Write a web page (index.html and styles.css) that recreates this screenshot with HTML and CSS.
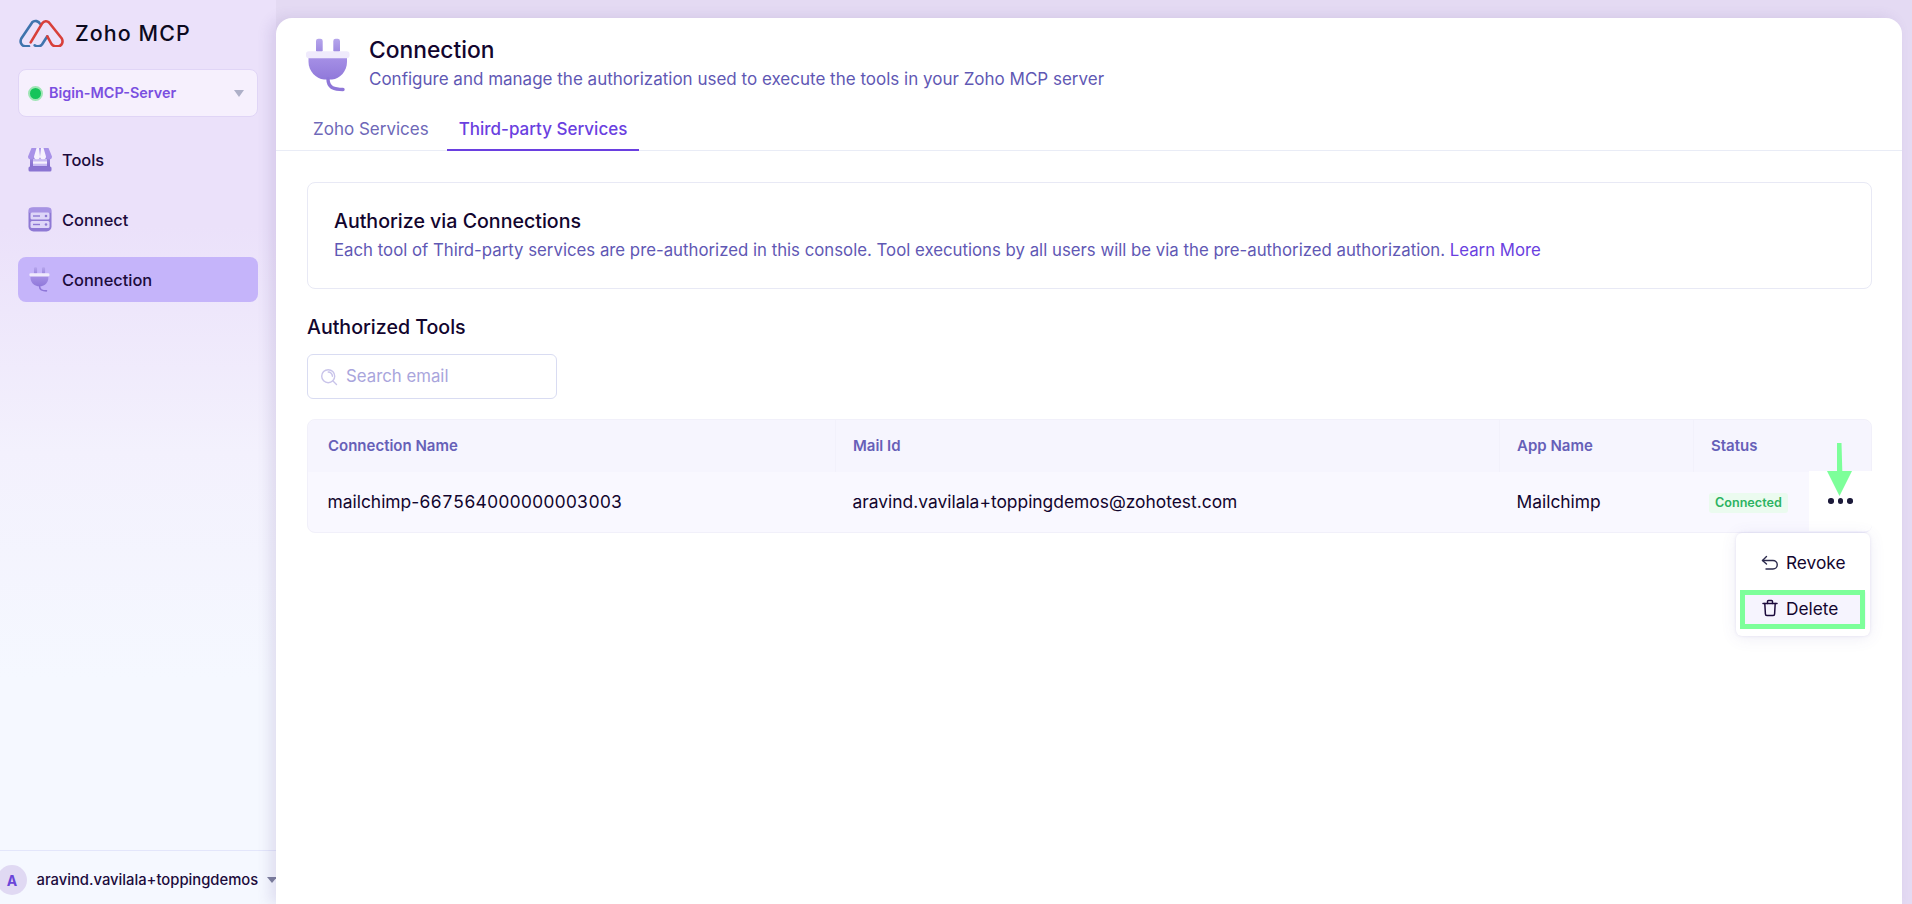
FILE: index.html
```html
<!DOCTYPE html>
<html lang="en">
<head>
<meta charset="utf-8">
<title>Zoho MCP - Connection</title>
<link rel="stylesheet" href="styles.css">
</head>
<body>
<svg class="defs" width="0" height="0" aria-hidden="true">
  <defs>
    <linearGradient id="plugBody" x1="0" y1="0" x2="0" y2="1">
      <stop offset="0" stop-color="#a690e6"/>
      <stop offset="1" stop-color="#9079da"/>
    </linearGradient>
    <linearGradient id="plugProng" x1="0" y1="0" x2="0" y2="1">
      <stop offset="0" stop-color="#b6a6ec"/>
      <stop offset="1" stop-color="#9d88e0"/>
    </linearGradient>
    <linearGradient id="shopBody" x1="0" y1="0" x2="0" y2="1">
      <stop offset="0" stop-color="#a592e2"/>
      <stop offset="1" stop-color="#7b63c8"/>
    </linearGradient>
    <g id="plug">
      <rect x="10" y="0.7" width="6.7" height="14" rx="2.4" fill="url(#plugProng)"/>
      <rect x="27.3" y="0.7" width="6.7" height="14" rx="2.4" fill="url(#plugProng)"/>
      <path d="M2.5 19h38.5v5C41 33 34 41 26 41.5H18C10 41 2.5 33 2.5 24z" fill="url(#plugBody)"/>
      <rect x="0" y="13.3" width="43.5" height="7" rx="2.8" fill="#efeafc"/>
      <path d="M22 41c0 4.5 1 6.5 4 8.500 3 1.500 7 2 11 2" fill="none" stroke="#8e76d8" stroke-width="3.400" stroke-linecap="round"/>
    </g>
  </defs>
</svg>
<div class="app">
  <aside class="sidebar">
    <div class="brand">
      <svg class="brand-logo" viewBox="0 0 45 28" fill="none" stroke-width="2.6" stroke-linecap="round" stroke-linejoin="round">
        <path d="M21 4.700C19.800 2.200 15.500 .8 13.300 3.200L2.300 19.500C.6 22.800 2.300 27 6 27.200H10" stroke="#3f74ad"/>
        <path d="M15.700 26.300C18 27.700 21 27.800 23 25.500L28.300 17.300" stroke="#3f74ad"/>
        <path d="M11.700 23.300L23.300 4.200C25 1.800 28.300 1.800 30 3.500L42.800 19.500C44.500 22.800 43 27 39.500 27.200H36.500C34.500 27.200 33.500 26.500 32.500 25L28.300 17.300" stroke="#d8403a"/>
      </svg>
      <span class="brand-name">Zoho MCP</span>
    </div>
    <div class="server-select">
      <span class="status-dot"></span>
      <span class="server-name">Bigin-MCP-Server</span>
      <span class="caret caret-server"></span>
    </div>
    <nav class="nav">
      <div class="nav-item">
        <svg class="nav-icon" viewBox="0 0 24 25">
          <rect x="2" y="8" width="20" height="15" rx="1.500" fill="url(#shopBody)"/>
          <rect x="5" y="12" width="14" height="7" fill="#c8bcf3"/>
          <rect x="5" y="14.500" width="14" height="2.200" fill="#f5f1fd"/>
          <rect x="0.500" y="19.500" width="23" height="5" rx="1.500" fill="#8a74d2"/>
          <path d="M3.500 1h17L24 9.500a3 3 0 0 1-6 0 3 3 0 0 1-6 0 3 3 0 0 1-6 0 3 3 0 0 1-6 0z" fill="#a892e8"/>
          <path d="M8.500 1h2.500L12 9.500a3 3 0 0 1-6 0z M13 1h2.500L18 9.500a3 3 0 0 1-6 0z" fill="#f6f2fe"/>
        </svg>
        <span>Tools</span>
      </div>
      <div class="nav-item">
        <svg class="nav-icon" viewBox="0 0 24 25">
          <rect x="0.500" y="0.500" width="23" height="24" rx="5" fill="#8e79d4"/>
          <rect x="0.500" y="0.500" width="23" height="6" rx="3" fill="#a793e4"/>
          <rect x="2.500" y="5.500" width="19" height="7" rx="1.500" fill="#ded6f8"/>
          <rect x="2.500" y="14" width="19" height="7" rx="1.500" fill="#ded6f8"/>
          <rect x="5" y="8.300" width="7" height="1.400" fill="#8e79d4"/>
          <rect x="5" y="16.800" width="7" height="1.400" fill="#8e79d4"/>
          <circle cx="18" cy="9" r="1.300" fill="#8e79d4"/>
          <circle cx="18" cy="17.500" r="1.300" fill="#8e79d4"/>
        </svg>
        <span>Connect</span>
      </div>
      <div class="nav-item nav-item-active">
        <svg class="nav-icon" viewBox="0 0 46 54">
          <use href="#plug"/>
        </svg>
        <span>Connection</span>
      </div>
    </nav>
    <div class="user-bar">
      <span class="avatar">A</span>
      <span class="user-name">aravind.vavilala+toppingdemos</span>
      <span class="caret caret-user"></span>
    </div>
  </aside>

  <main class="panel">
    <header class="page-head">
      <svg class="page-icon" viewBox="0 0 46 54">
        <use href="#plug"/>
      </svg>
      <div class="page-titles">
        <h1 class="page-title">Connection</h1>
        <p class="page-sub">Configure and manage the authorization used to execute the tools in your Zoho MCP server</p>
      </div>
    </header>
    <div class="tabs">
      <div class="tab">Zoho Services</div>
      <div class="tab tab-active">Third-party Services</div>
    </div>
    <section class="content">
      <div class="info-box">
        <h2 class="info-title">Authorize via Connections</h2>
        <p class="info-text">Each tool of Third-party services are pre-authorized in this console. Tool executions by all users will be via the pre-authorized authorization. <a class="link">Learn More</a></p>
      </div>
      <h2 class="section-title">Authorized Tools</h2>
      <div class="search">
        <svg class="search-icon" viewBox="0 0 18 18" fill="none" stroke="#c9c4ea" stroke-width="1.4" stroke-linecap="round">
          <circle cx="8.200" cy="8.200" r="6.500"/>
          <path d="M13 13l3.500 3.500"/>
          <path d="M8.200 4a4.200 4.200 0 0 1 4.200 4.200"/>
        </svg>
        <span class="search-text">Search email</span>
      </div>
      <div class="table">
        <div class="row head-row">
          <div class="cell c1">Connection Name</div>
          <div class="cell c2">Mail Id</div>
          <div class="cell c3">App Name</div>
          <div class="cell c4">Status</div>
        </div>
        <div class="row body-row">
          <div class="cell c1">mailchimp-<span class="digits">667564000000003003</span></div>
          <div class="cell c2">aravind.vavilala+toppingdemos@zohotest.com</div>
          <div class="cell c3">Mailchimp</div>
          <div class="cell c4"><span class="badge">Connected</span></div>
        </div>
        <div class="more"><span class="dot"></span><span class="dot"></span><span class="dot"></span></div>
        <div class="menu">
          <div class="menu-item">
            <svg class="menu-icon" viewBox="0 0 18 18" fill="none" stroke="#2b2a4c" stroke-width="1.4" stroke-linecap="round" stroke-linejoin="round">
              <path d="M5.500 2.500L1.500 6.500l4 3.500"/>
              <path d="M1.500 6.500H12a4.200 4.200 0 0 1 0 8.500H5"/>
            </svg>
            <span>Revoke</span>
          </div>
          <div class="menu-item menu-item-hover">
            <svg class="menu-icon" viewBox="0 0 18 18" fill="none" stroke="#1c0b3c" stroke-width="1.5" stroke-linecap="round" stroke-linejoin="round">
              <path d="M2 4.500h14"/>
              <path d="M6.500 4.500V2.500c0-.6.4-1 1-1h3c.6 0 1 .4 1 1v2"/>
              <path d="M3.800 4.500l.6 10.500c0 .9.7 1.500 1.500 1.500h6.200c.8 0 1.500-.6 1.500-1.500l.6-10.500"/>
            </svg>
            <span>Delete</span>
          </div>
        </div>
        <div class="highlight"></div>
        <svg class="arrow" viewBox="0 0 28 54">
          <path d="M12 0h4.500l.8 28H27L14.500 53 2 28h10z" fill="#7dff9a"/>
        </svg>
      </div>
    </section>
  </main>
</div>
</body>
</html>
```
FILE: styles.css
```css
* { box-sizing: border-box; }
html, body { margin: 0; height: 100%; overflow: hidden; }
body {
  font-family: Inter, "Noto Sans", sans-serif;
  color: #1c0b3c;
  background: #e4daf3;
}
h1, h2, p { margin: 0; }
.defs { position: absolute; }
.app { display: flex; height: 904px; width: 1912px; }

.sidebar {
  width: 276px;
  flex: none;
  display: flex;
  flex-direction: column;
  background: linear-gradient(180deg, #ebe1fa 0%, #ebe1fa 25%, #f3f1fd 50%, #f5f8ff 75%, #f5f8ff 100%);
  position: relative;
}
.brand { display: flex; align-items: center; gap: 11px; height: 69px; padding: 0 0 3px 19px; }
.brand-logo { width: 45px; height: 28px; flex: none; }
.brand-name { font-size: 21.4px; font-weight: 500; letter-spacing: 1.1px; color: #0c0a1e; }
.server-select {
  margin: 0 18px;
  height: 48px;
  display: flex;
  align-items: center;
  padding: 0 13px 2px 9px;
  background: #f6f0fd;
  border: 1px solid #e0d5f6;
  border-radius: 8px;
}
.status-dot {
  width: 15px; height: 15px; border-radius: 50%;
  background: #16c45a;
  border: 2.5px solid #9fe5b5;
  flex: none;
  margin-top: 2px;
}
.server-name { margin-left: 6px; font-size: 14.4px; font-weight: 600; color: #7a4fe0; flex: 1; white-space: nowrap; }
.caret { width: 0; height: 0; border-left: 5.5px solid transparent; border-right: 5.5px solid transparent; flex: none; }
.caret-server { border-top: 7px solid #aeb0c8; margin-top: 2px; }
.caret-user { border-top: 6px solid #7c7f9c; margin-left: 9px; }

.nav { display: flex; flex-direction: column; gap: 15px; margin: 20px 18px 0; }
.nav-item {
  height: 45px;
  display: flex;
  align-items: center;
  gap: 10px;
  padding: 0 10px;
  font-size: 16.4px;
  font-weight: 500;
  color: #1c0b3c;
  border-radius: 8px;
}
.nav-item-active { background: #c5b4fa; }
.nav-icon { width: 24px; height: 25px; flex: none; }

.user-bar {
  margin-top: auto;
  height: 54px;
  border-top: 1px solid #e3e6fb;
  display: flex;
  align-items: center;
  padding-top: 5px;
  overflow: hidden;
  white-space: nowrap;
  flex: none;
}
.avatar {
  width: 30px; height: 30px;
  margin-left: -3px;
  border-radius: 50%;
  background: #e0d9f3;
  color: #6a45d8;
  font-size: 14px;
  font-weight: 700;
  display: flex;
  align-items: center;
  justify-content: center;
  flex: none;
}
.user-name { margin-left: 9.5px; font-size: 14.8px; font-weight: 500; color: #1c0b3c; }

.panel {
  width: 1626px;
  flex: none;
  margin-top: 18px;
  height: 886px;
  background: #fff;
  border-radius: 16px 16px 0 0;
  box-shadow: -6px 0 14px rgba(90, 70, 150, .14);
  position: relative;
}
.page-head { display: flex; align-items: flex-start; gap: 17px; padding: 20px 28px 0 30px; height: 85px; }
.page-icon { width: 46px; height: 54px; flex: none; }
.page-title { font-size: 22.8px; font-weight: 500; line-height: 24px; color: #12052e; }
.page-sub { margin-top: 4px; font-size: 17px; line-height: 26px; color: #5f58b4; }
.tabs { display: flex; gap: 6px; height: 48px; padding-left: 25px; border-bottom: 1px solid #e9ecf6; }
.tab { padding: 0 12px; height: 48px; line-height: 53px; font-size: 17px; color: #6e68b8; }
.tab-active { color: #6a3fe0; font-weight: 500; border-bottom: 2px solid #6a3fe0; }

.content { padding: 31px 30px 0 31px; }
.info-box { height: 107px; padding: 25px 26px 0; border: 1px solid #e8e9f5; border-radius: 8px; }
.info-title { font-size: 19.6px; font-weight: 500; line-height: 26px; color: #12052e; }
.info-text { margin-top: 3px; font-size: 16.8px; line-height: 26px; color: #5f58b4; }
.link { color: #6a3fe0; }
.section-title { margin-top: 25px; font-size: 19.6px; font-weight: 500; line-height: 26px; color: #12052e; }
.search {
  margin-top: 14px;
  width: 250px; height: 45px;
  border: 1px solid #d9dcf2;
  border-radius: 6px;
  display: flex;
  align-items: center;
  padding: 0 0 2px 12px;
  gap: 8px;
}
.search-icon { width: 18px; height: 18px; flex: none; margin-top: 2px; }
.search-text { font-size: 16.8px; color: #a9a5dc; }

.table { position: relative; margin-top: 20px; width: 1565px; background: #f9f8ff; border: 1px solid #f1f0fa; border-radius: 8px; height: 114px; }
.row { display: grid; grid-template-columns: 528px 664px 194px 177px; }
.head-row { height: 52px; background: #f6f5fe; border-radius: 8px 8px 0 0; font-size: 15px; font-weight: 600; color: #6660b8; }
.head-row .cell { line-height: 51px; border-right: 1px solid #f2f1fb; padding-left: 17px; }
.head-row .c1 { padding-left: 20px; }
.head-row .c4 { padding-left: 17px; border-right: 0; }
.body-row { height: 61px; font-size: 17.4px; color: #12052e; }
.body-row .cell { line-height: 60px; padding-left: 16.5px; white-space: nowrap; }
.body-row .c1 { padding-left: 19.5px; }
.digits { font-variant-numeric: tabular-nums; }
.body-row .c4 { padding-left: 15px; }
.badge {
  display: inline-block;
  padding: 0 6px;
  line-height: 20px;
  background: #ebfbef;
  color: #2cb362;
  font-size: 12.6px;
  font-weight: 600;
  border-radius: 3px;
  position: relative;
  top: -1px;
}
.more {
  position: absolute;
  right: -1px; top: 51px;
  width: 63px; height: 60px;
  background: #fff;
  display: flex;
  align-items: center;
  justify-content: center;
  gap: 4px;
  border-bottom-right-radius: 6px;
}
.dot { width: 5.5px; height: 5.5px; border-radius: 50%; background: #1c1a3a; }
.menu {
  position: absolute;
  right: 1px; top: 113px;
  width: 134px; height: 103px;
  background: #fff;
  border-radius: 6px;
  padding: 7px 4px 0;
  box-shadow: 0 0 3px rgba(90, 80, 170, .14), 0 2px 16px rgba(90, 80, 170, .1);
}
.menu-item {
  height: 45px;
  display: flex;
  align-items: center;
  gap: 7px;
  padding-left: 21px;
  font-size: 17.3px;
  color: #12052e;
  border-radius: 4px;
}
.menu-item-hover { background: #f6f4fe; height: 39px; margin-top: 5px; padding-bottom: 3px; }
.menu-icon { width: 18px; height: 18px; flex: none; }
.highlight {
  position: absolute;
  right: 6px; top: 170px;
  width: 125px; height: 39px;
  border: 5px solid #7dff9a;
}
.arrow { position: absolute; right: 18px; top: 23px; width: 28px; height: 54px; }
```
